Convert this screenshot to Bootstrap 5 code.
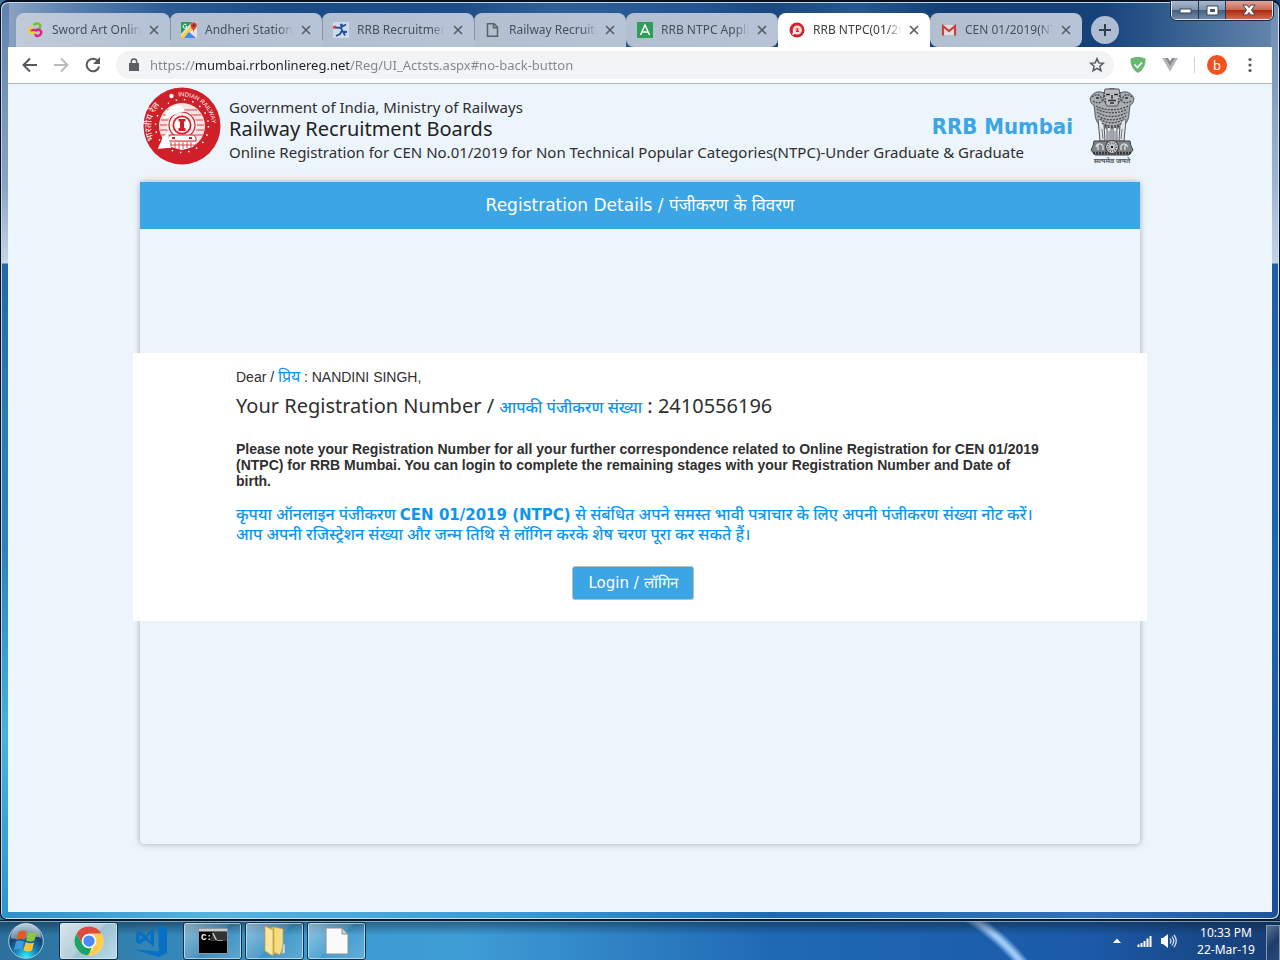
<!DOCTYPE html>
<html lang="en">
<head>
<meta charset="utf-8">
<meta name="viewport" content="width=device-width, initial-scale=1">
<title>RRB NTPC(01/2019)</title>
<link href="https://cdn.jsdelivr.net/npm/bootstrap@5.3.0/dist/css/bootstrap.min.css" rel="stylesheet">
<style>
:root{--sky:#3ba5e5;--page:#ecf4fc;--ink:#2f2f2f;--ui:"Noto Sans","Open Sans",sans-serif;--tahoma:"Noto Sans","DejaVu Sans Condensed",sans-serif}
body{font-family:"Liberation Sans",Arial,sans-serif;color:var(--ink);background:linear-gradient(90deg,#2c6f9c,#3c9ace 25%,#3f9dd6 36%,#1f69b4 60%,#1b5aa8 85%,#173d73)}
svg{display:block;flex:none}
.plain-btn{border:0;background:none;padding:0;display:flex;align-items:center;justify-content:center;color:#5a5f65;flex:none}
/* window frame */
.frame{border:1px solid #06101f;border-top-width:2px;border-radius:8px 8px 7px 7px;padding:0 7px 7px;
 box-shadow:inset 1px 1px 0 #c4d6e8,inset -1px -1px 0 #cfe4f4;
 background:
 linear-gradient(#5f82ae,#8ba3c4 20%,#c3d3e6 28%,#cddbea 261px,#2468a8 262px,#2a7ab4 45%,#2d83bd 60%,#45b4e2 80%,#2f93cb) left/8px 100% no-repeat,
 linear-gradient(#6c8cb0,#9fb5cf 20%,#c3d3e6 261px,#1d5fa6 262px,#1b66ad 60%,#1b4f96) right/8px 100% no-repeat,
 linear-gradient(90deg,#2c8fc7,#54b5df 17%,#3a9bd6 40%,#1e6ab2 60%,#3071b8 85%,#1e559c) bottom/100% 8px no-repeat,
 linear-gradient(90deg,#8ea6c4,#5d82b0 5%,#2b5b95 13%,#1b4a85 22%,#1d4d88 36%,#2e6097 43%,#235390 55%,#1a477f 60%,#275790 67%,#123e73 74%,#16427a 86%,#3c6594 93%,#6787ac)}
.win-ctl{right:6px;top:-1px;border:1px solid #dfe8f2;border-top:0;border-radius:0 0 5px 5px;overflow:hidden;outline:1px solid #1a2a44}
.win-ctl button{width:27px;height:18px;background:linear-gradient(#a9b9cc,#8195b0 48%,#455f83 52%,#7187a6);border-right:1px solid #26364f}
.win-ctl button:last-child{width:46px;border:0;background:linear-gradient(#e0a497,#cc6b57 48%,#aa2a10 52%,#d2694c)}
.tabstrip{padding:11px 0 0 8px;height:45px}
.tab-item{flex:0 1 152px;min-width:0;height:34px;padding:0 11px;background:linear-gradient(90deg,#b2bfd1,#b7c3d6);border-radius:8px 8px 0 0;position:relative}
.tab-item:first-child{flex-basis:154px;padding-left:12px;background:linear-gradient(90deg,#c0cad9,#b4c2d6)}
.tab-item+.tab-item:not(.on):not(.after)::before{content:"";position:absolute;left:0;top:7px;height:20px;border-left:1px solid #8593a7}
.tab-item a{font:12px/16px var(--ui);color:#44505e;white-space:nowrap;overflow:hidden;text-decoration:none;-webkit-mask:linear-gradient(90deg,#000 84%,transparent);mask:linear-gradient(90deg,#000 84%,transparent)}
.tab-item.on{background:#fff}
.tab-item.on a{color:#3c4043}
.tab-item.after{border-radius:8px}
.new-tab{width:28px;height:28px;border-radius:50%;background:#aebdd1;color:#2d3f55;margin:3px 0 0 9px}
.toolbar{height:37px;background:#fff;border-bottom:1px solid #b6b4b8;padding:0 15px 0 13px}
.nav-btn{margin-right:15px}
.addr{height:28px;border-radius:14px;background:#f1f3f4;padding:0 9px 0 12px}
.addr input{border:0;outline:0;font:13px/20px var(--ui);padding:0;margin-left:10px;min-width:0;color:transparent;
 background:linear-gradient(90deg,#80868b 46px,#202124 46px 200px,#80868b 200px);-webkit-background-clip:text;background-clip:text}
.avatar{width:20px;height:20px;border-radius:50%;background:#f4511e;color:#fff;font:13px/20px var(--ui)}
.divider{width:1px;height:16px;background:#cfd1d4;margin:0 12px 0 16px}
/* site */
.site{background:var(--page)}
.wrap{max-width:1000px;width:100%}
.brand{font-family:var(--tahoma);padding:3px 5px 1px 3px}
.brand p{margin:0;font-size:15px;line-height:22px;color:var(--ink)}
.brand h1{margin:0;font-size:20px;line-height:22px;font-weight:400;color:#222}
.board{font:bold 22px/28px "DejaVu Sans Condensed","DejaVu Sans",sans-serif;color:var(--sky);padding-top:18px}
.sheet{background:var(--page);border-radius:4px;box-shadow:0 0 6px rgba(0,0,0,.3)}
.sheet-head{background:var(--sky);color:#fff;font:17px/47px "DejaVu Sans","Noto Sans",sans-serif;margin:0}
.sheet-body{padding:124px 0 223px}
.notice{margin:0 -7px;background:#fff;padding:14px 103px 21px;position:relative;font-size:14px;line-height:16px}
.hi{color:#0c96f0}
.notice .dear{line-height:20px;margin:0}
.notice h2{font:20px/28px var(--tahoma);color:var(--ink);margin:5px 0 20px}
.dear .hi,h2 .hi{font-size:16px;font-weight:500}
.notice .hindi{font:500 16px/19px "Noto Sans",sans-serif;margin:0 0 22px}
.hindi b{font:bold 15px/19px "DejaVu Sans",sans-serif}
.login{background:var(--sky);color:#fff;border:1px solid #b9bcc0;border-radius:3px;font:15px/24px "DejaVu Sans",sans-serif;padding:4px 15px;margin-right:14px}
.login:hover{background:#2f97d6;color:#fff}
/* taskbar */
.taskbar{height:40px;border-top:1px solid #0b1d2e;box-shadow:inset 0 1px 0 rgba(190,220,240,.6);
 background:linear-gradient(rgba(10,30,50,.5),rgba(10,30,50,0) 14px),radial-gradient(circle at -17px 170px,transparent 197px,#8fbdf0 202px,#a5cdf7 204px,#8fbdf0 206px,transparent 211px) 80% 0/180px 100% no-repeat}
.start{margin:0 15px 0 8px}
.task{width:59px;height:38px;margin:1px 3px 0 0;border:1px solid #10304a;border-radius:3px;box-shadow:inset 0 0 0 1px rgba(220,240,250,.65);background:linear-gradient(135deg,rgba(255,255,255,.45),rgba(255,255,255,.12) 50%,rgba(255,255,255,.03) 51%,rgba(255,255,255,.2))}
.task.live{background:linear-gradient(135deg,#dbe6ea,#b3cdd8 50%,#9cc1d2 51%,#b8dcea)}
.task.bare{border-color:transparent;box-shadow:none;background:none}
.tray{margin-right:10px}
.clock{font:12px/17px var(--ui);color:#fff;width:78px;margin:3px 1px 0 0}
.peek{width:14px;height:38px;border:1px solid #8298b4;background:linear-gradient(135deg,#5d7492,#1d3c66 50%,#2a4d7d)}
</style>
</head>
<body class="min-vh-100 d-flex flex-column">

<svg width="0" height="0" class="position-absolute" aria-hidden="true">
 <symbol id="x" viewBox="0 0 10 10"><path d="M1 1l8 8M9 1L1 9" stroke="currentColor" stroke-width="1.7"/></symbol>
</svg>

<div class="frame flex-grow-1 d-flex flex-column position-relative">
 <div class="win-ctl position-absolute d-flex">
  <button class="plain-btn" aria-label="Minimize"><svg width="13" height="8"><rect x="1" y="3" width="11" height="4" fill="#fff" stroke="#3b4658"/></svg></button>
  <button class="plain-btn" aria-label="Restore"><svg width="13" height="11"><path d="M1 1h11v9H1zM4.500 4.500v2h4v-2z" fill="#fff" fill-rule="evenodd" stroke="#3b4658"/></svg></button>
  <button class="plain-btn" aria-label="Close"><svg width="14" height="12"><path d="M1 1h4l2 2.500L9 1h4L9.500 6l3.500 5H9L7 8.500 5 11H1l3.500-5z" fill="#fff" stroke="#4b4650"/></svg></button>
 </div>

 <nav class="tabstrip d-flex" aria-label="Tabs">
  <div class="tab-item d-flex align-items-center gap-2">
   <svg width="16" height="16" viewBox="0 0 16 16" fill="none" stroke-width="2.400"><path d="M6 3.500C7 .500 12.500 1 12.300 4.500c-.3 2.500-2.500 3-4.300 2.500" stroke="#76bf3a"/><path d="M4.500 4.500C1 5.500 1 10.500 4 11c2 .2 4-1 3.500-4" stroke="#f2cf1f"/><path d="M3 9c2-2 4-1 5-.5 3-2 6 .5 5 3-1 3-5 3.500-6 .500" stroke="#e3218c"/></svg>
   <a href="#" class="flex-grow-1">Sword Art Online</a><button class="plain-btn" aria-label="Close tab"><svg width="10" height="10"><use href="#x"/></svg></button>
  </div>
  <div class="tab-item d-flex align-items-center gap-2">
   <svg width="16" height="16" viewBox="0 0 16 16"><path d="M0 0h16v16H0z" fill="#e8e4dc"/><path d="M0 0h11L0 12z" fill="#279b5a"/><path d="M0 14L11 3l2 3L3 16H0z" fill="#f7cf46"/><path d="M3 16l5-6 7 6z" fill="#4285f4"/><path d="M12.500 10C12 7 9.500 6 9.500 3.500a3.200 3.200 0 0 1 6.400 0C15.900 6 13 7 12.500 10z" fill="#d5443a"/><circle cx="12.700" cy="3.500" r="1.200" fill="#7c241e"/><path d="M5.500 3A2 2 0 1 0 6 4.500H4.500" fill="none" stroke="#fff"/></svg>
   <a href="#" class="flex-grow-1">Andheri Station (</a><button class="plain-btn" aria-label="Close tab"><svg width="10" height="10"><use href="#x"/></svg></button>
  </div>
  <div class="tab-item d-flex align-items-center gap-2">
   <svg width="16" height="16" viewBox="0 0 16 16"><path d="M0 0h16v16H0z" fill="#cfdaea"/><path d="M2 5.500l5 .3 6-3.300M8 5.500l1.500 4 4.500.5M9 8.500L7 12l-4 2M10 9.500l2 4" fill="none" stroke="#2350a0" stroke-width="1.800"/><circle cx="8.500" cy="3" r="1.500" fill="#2350a0"/><path d="M0 4.500l3-1v3H0z" fill="#d43a3a"/></svg>
   <a href="#" class="flex-grow-1">RRB Recruitment</a><button class="plain-btn" aria-label="Close tab"><svg width="10" height="10"><use href="#x"/></svg></button>
  </div>
  <div class="tab-item d-flex align-items-center gap-2">
   <svg width="16" height="16" viewBox="0 0 16 16" fill="none" stroke="#5a6066" stroke-width="1.500"><path d="M2.500 1.700h6.500l3.500 3.600v9H2.500zM8.500 1.700v4h4"/></svg>
   <a href="#" class="flex-grow-1">Railway Recruitment</a><button class="plain-btn" aria-label="Close tab"><svg width="10" height="10"><use href="#x"/></svg></button>
  </div>
  <div class="tab-item after d-flex align-items-center gap-2">
   <svg width="16" height="16" viewBox="0 0 16 16"><path d="M0 0h16v16H0z" fill="#2f9e58"/><path d="M3.500 13L8 3l4.500 10M5 10h6" fill="none" stroke="#fff" stroke-width="1.500"/></svg>
   <a href="#" class="flex-grow-1">RRB NTPC Application</a><button class="plain-btn" aria-label="Close tab"><svg width="10" height="10"><use href="#x"/></svg></button>
  </div>
  <div class="tab-item on d-flex align-items-center gap-2">
   <svg width="16" height="16" viewBox="0 0 16 16"><circle cx="8" cy="8" r="7.500" fill="#d2232e"/><circle cx="8.300" cy="8" r="4.600" fill="#fbe0e0"/><path d="M3 13l2-6 1 5z" fill="#fff"/><circle cx="8.300" cy="7.800" r="2.200" fill="#ee9a9d"/><path d="M7 9.500h3M8.300 6.500v3" stroke="#d2232e"/></svg>
   <a href="#" class="flex-grow-1">RRB NTPC(01/2019)</a><button class="plain-btn" aria-label="Close tab"><svg width="10" height="10"><use href="#x"/></svg></button>
  </div>
  <div class="tab-item after d-flex align-items-center gap-2">
   <svg width="16" height="16" viewBox="0 0 16 16"><path d="M2 3h12v10H2z" fill="#dfe0e4"/><path d="M2 13.500V4l6 5 6-5v9.500" fill="none" stroke="#c9403b" stroke-width="2.200"/></svg>
   <a href="#" class="flex-grow-1">CEN 01/2019(NTPC)</a><button class="plain-btn" aria-label="Close tab"><svg width="10" height="10"><use href="#x"/></svg></button>
  </div>
  <button class="plain-btn new-tab" aria-label="New tab"><svg width="12" height="12"><path d="M6 0v12M0 6h12" stroke="currentColor" stroke-width="2"/></svg></button>
 </nav>

 <div class="toolbar d-flex align-items-center">
  <button class="plain-btn nav-btn" aria-label="Back"><svg width="17" height="16" fill="none" stroke="#54585d" stroke-width="2"><path d="M16 8H2.500M9 1.500L2.500 8 9 14.500"/></svg></button>
  <button class="plain-btn nav-btn" aria-label="Forward"><svg width="17" height="16" fill="none" stroke="#b9bbbe" stroke-width="2"><path d="M1 8h13.500M8 1.500L14.500 8 8 14.500"/></svg></button>
  <button class="plain-btn nav-btn" aria-label="Reload"><svg width="16" height="16"><path d="M13 4.200A6.300 6.300 0 1 0 14.100 9.500" fill="none" stroke="#54585d" stroke-width="2"/><path d="M15 0v7H8z" fill="#54585d"/></svg></button>
  <div class="addr flex-grow-1 d-flex align-items-center">
   <svg width="12" height="14"><path d="M1 5h10v8H1z" fill="#5a5f65"/><path d="M3.300 6V3.700a2.700 2.700 0 0 1 5.400 0V6" fill="none" stroke="#5a5f65" stroke-width="1.500"/></svg>
   <input class="flex-grow-1" type="text" aria-label="Address" value="https://mumbai.rrbonlinereg.net/Reg/UI_Actsts.aspx#no-back-button">
   <button class="plain-btn" aria-label="Bookmark"><svg width="16" height="16" viewBox="0 0 16 16"><path d="M8 1.800l1.800 4.100 4.500.4-3.400 3 1 4.400L8 11.400l-3.900 2.300 1-4.400-3.400-3 4.500-.4z" fill="none" stroke="#54585d" stroke-width="1.500"/></svg></button>
  </div>
  <button class="plain-btn ms-3" aria-label="Ad blocker"><svg width="16" height="16"><path d="M8 0c3 0 5 .600 7.500 1.500C16 8 13 13 8 16 3 13 0 8 .500 1.500 3 .600 5 0 8 0z" fill="#67b96f"/><path d="M4.500 7.500l3 3 4.500-5" fill="none" stroke="#fff" stroke-width="1.700"/></svg></button>
  <button class="plain-btn ms-3" aria-label="Vue devtools"><svg width="16" height="14"><path d="M0 0h3l5 8.500L13 0h3L8 13.500z" fill="#b5b8bb"/><path d="M3 0h3l2 3.300L10 0h3L8 8.500z" fill="#868a8e"/></svg></button>
  <span class="divider"></span>
  <button class="plain-btn avatar">b</button>
  <button class="plain-btn ms-3" aria-label="Menu"><svg width="14" height="16"><g fill="#54585d"><circle cx="7" cy="2.500" r="1.600"/><circle cx="7" cy="8" r="1.600"/><circle cx="7" cy="13.500" r="1.600"/></g></svg></button>
 </div>

 <main class="site flex-grow-1">
  <div class="wrap mx-auto">
   <header class="d-flex brand">
    <svg width="78" height="78" viewBox="0 0 78 78" role="img" aria-label="Indian Railways">
     <circle cx="39" cy="39" r="38.500" fill="#cf1f28"/>
     <circle cx="39" cy="39" r="26.500" fill="none" stroke="#fff" stroke-width="1.500" stroke-dasharray="1.500 6.900"/>
     <circle cx="39" cy="39" r="23" fill="#f9e4e3"/>
     <path d="M24 23h30M20 28h38M18 33h42M17 38h44M17 43h44M18 48h42" stroke="#e3777a" stroke-width="1.500"/>
     <circle cx="39" cy="39" r="15" fill="#fff" opacity=".75"/>
     <circle cx="39" cy="38" r="13" fill="none" stroke="#cf1f28" stroke-width="1.200"/>
     <circle cx="39" cy="38" r="9.500" fill="#cf1f28"/><circle cx="39" cy="38" r="7.800" fill="#fff"/>
     <path d="M35.500 32h7v2.500H41v6.500h1.500v3h-7v-3H37v-6.500h-1.500z" fill="#cf1f28"/>
     <path d="M27 48h24l2 3v3H25v-3z" fill="#fff" stroke="#cf1f28"/><path d="M29 51h3M46 51h3" stroke="#cf1f28" stroke-width="2"/>
     <path d="M26 55h27l-3 5-11 3-11-3z" fill="#fff"/><path d="M28 55v5M32 55v6M36 55v7M40 55v7M44 55v6M48 55v6M27 58h25" stroke="#cf1f28" stroke-width=".8"/>
     <path d="M15 62c1-5 4-7 4-11 2-2 4-3 6-7l1 9 2 8c-4 0-8 0-13 1z" fill="#fff"/>
     <path d="M24 24c4-4 10-6 14-6l4 6-9 3-12 5z" fill="#fff"/>
     <circle cx="28.500" cy="9" r="2.200" fill="#fff"/>
     <path id="arcR" d="M35.500 9.500A30 30 0 0 1 69 42" fill="none"/><path id="arcL" d="M11 53A32 32 0 0 1 25 12" fill="none"/>
     <text font-family="Liberation Sans,sans-serif" font-size="6" fill="#fff"><textPath href="#arcR">INDIAN RAILWAY</textPath></text>
     <text font-family="Noto Sans,sans-serif" font-size="9" fill="#fff"><textPath href="#arcL">भारतीय रेल</textPath></text>
    </svg>
    <div class="flex-grow-1 pt-2 ps-2">
     <div class="d-flex justify-content-between align-items-center">
      <div>
       <p>Government of India, Ministry of Railways</p>
       <h1>Railway Recruitment Boards</h1>
      </div>
      <div class="board text-nowrap">RRB Mumbai</div>
     </div>
     <p>Online Registration for CEN No.01/2019 for Non Technical Popular Categories(NTPC)-Under Graduate &amp; Graduate</p>
    </div>
    <svg class="ms-3" width="46" height="78" viewBox="0 0 46 78" role="img" aria-label="State Emblem of India">
     <g fill="#a9adb1" stroke="#55585c" stroke-width="1">
      <path d="M15 6C9 3 3 6 1 12c1 3 1 5 4 6l1 8c0 8 4 12 8 15h18c4-3 8-7 8-15l1-8c3-1 3-3 4-6-2-6-8-9-14-6-4-6-12-6-16 0z"/>
      <path d="M9 32l2 22h5l-1-17M18 38v17h4V40M24 40v15h4V38M31 37l-1 17h5l2-22" fill="#e3e6e9"/>
      <path d="M16 2h14l2 10-4 7H18l-4-7z" fill="#b9bcc0"/>
     </g>
     <g fill="none" stroke="#4a4d51" stroke-width="1.300" stroke-dasharray="2 1.100">
      <path d="M3 10c4-4 9-2 10 3M43 10c-4-4-9-2-10 3M4 14c4 3 8 2 10-1M42 14c-4 3-8 2-10-1M7 19c8 5 24 5 32 0M8 22c8 5 22 5 30 0M8 25c8 6 22 6 30 0M9 29c8 5 20 5 28 0M11 32c7 5 17 5 24 0M13 36c5 4 15 4 20 0M16 39c4 2 10 2 14 0M15 5l2 12M31 5l-2 12"/>
     </g>
     <path d="M17 7.500h4M25 7.500h4M23 8v4M19 13.500h8M21 16h4M7 11h3M36 11h3" stroke="#2c2e31" stroke-width="1.500"/>
     <path d="M13 42l1 10M33 42l-1 10M20 44v10M26 44v10" stroke="#73777b" stroke-width="1"/>
     <path d="M5 54h36l1 5 2 4-4 5H6l-4-5 2-4z" fill="#808488" stroke="#3c3f42"/>
     <path d="M4 66h38" stroke="#33363a" stroke-width="2.500" stroke-dasharray="2 1"/>
     <circle cx="23" cy="60" r="6.500" fill="#d4d7da" stroke="#444" stroke-width="1.200"/><circle cx="23" cy="60" r="4" fill="none" stroke="#666" stroke-width="2.500" stroke-dasharray="1 1"/><circle cx="23" cy="60" r="1.300" fill="#222"/>
     <path d="M7 60c1-4 5-4 7-1v4M9 58v5M32 63v-4c2-3 5-3 7 1M36 58v5" fill="none" stroke="#dfe2e4" stroke-width="1.300"/>
     <text x="23" y="76" text-anchor="middle" font-family="Noto Sans,sans-serif" font-size="7" font-weight="bold" fill="#55585c">सत्यमेव जयते</text>
    </svg>
   </header>

   <section class="sheet mt-3 mb-5">
    <h2 class="sheet-head text-center">Registration Details / पंजीकरण के विवरण</h2>
    <div class="sheet-body">
     <div class="notice">
      <p class="dear">Dear / <span class="hi">प्रिय</span> : NANDINI SINGH,</p>
      <h2>Your Registration Number / <span class="hi">आपकी पंजीकरण संख्या</span> : 2410556196</h2>
      <p class="fw-bold mb-3">Please note your Registration Number for all your further correspondence related to Online Registration for CEN 01/2019 (NTPC) for RRB Mumbai. You can login to complete the remaining stages with your Registration Number and Date of birth.</p>
      <p class="hi hindi">कृपया ऑनलाइन पंजीकरण <b>CEN 01/2019 (NTPC)</b> से संबंधित अपने समस्त भावी पत्राचार के लिए अपनी पंजीकरण संख्या नोट करें।<br>आप अपनी रजिस्ट्रेशन संख्या और जन्म तिथि से लॉगिन करके शेष चरण पूरा कर सकते हैं।</p>
      <div class="text-center"><button class="login" type="button">Login / लॉगिन</button></div>
     </div>
    </div>
   </section>
  </div>
 </main>
</div>

<footer class="taskbar d-flex">
 <button class="plain-btn start" aria-label="Start"><svg width="36" height="38" viewBox="0 0 36 36">
  <defs><radialGradient id="orb" cx=".5" cy=".95" r=".9"><stop offset="0" stop-color="#2ff0ff"/><stop offset=".35" stop-color="#1783b8"/><stop offset=".7" stop-color="#12406f"/><stop offset="1" stop-color="#7da3bd"/></radialGradient></defs>
  <circle cx="18" cy="18" r="17.300" fill="url(#orb)" stroke="#a9cbdc"/><path d="M3 15a15 15 0 0 1 30 0c-8-4-22 4-30 0z" fill="#fff" opacity=".4"/>
  <path d="M10.500 9c3-2 5-2 8-.5L16.500 17c-3-1.500-5.500-1.300-8 0z" fill="#e8562a"/><path d="M20 9c3 1.500 5.500 1.500 9 0l-2.500 8.500c-3 1.500-5.500 1.200-8.300-.2z" fill="#8cc63f"/><path d="M8 18.500c3-1.500 5-1.300 8 .2L14 27c-3-1.500-5-1.300-8 0z" fill="#3f9be0"/><path d="M17.700 19.200c3 1.500 5.500 1.500 8.300.2L24 27.500c-3 1.500-5.500 1.200-8.500-.2z" fill="#fcc530"/></svg></button>
 <button class="plain-btn task live" aria-label="Chrome"><svg width="30" height="30" viewBox="0 0 48 48"><circle cx="24" cy="24" r="23" fill="#fff"/><path d="M24 1a23 23 0 0 1 20 11.500H24a11.500 11.500 0 0 0-10 17.200L4 12.500A23 23 0 0 1 24 1z" fill="#dd4b3e"/><path d="M4 12.500l10 17.200A11.500 11.500 0 0 0 28 34.800L24 47A23 23 0 0 1 4 12.500z" fill="#1da462"/><path d="M44 12.500A23 23 0 0 1 22 47l12-17.300a11.500 11.500 0 0 0-10-17.200z" fill="#ffcd46"/><circle cx="24" cy="24" r="11.500" fill="#f4f4f4"/><circle cx="24" cy="24" r="9" fill="#4c8bf5"/></svg></button>
 <button class="plain-btn task bare" aria-label="Visual Studio Code"><svg width="33" height="32" viewBox="0 0 33 32"><path d="M24.500 0L33 3.500v24.500L24.500 32 0 24.500l24.500 2z" fill="#0670c4"/><path d="M20 3v19L11.500 14.800 6 19l-4-2V8l4-2 5.500 4.200zM16.500 8.500L13 12.500l3.500 4zM5.500 9.500v6l3.300-3z" fill="#0670c4" fill-rule="evenodd"/></svg></button>
 <button class="plain-btn task" aria-label="Command Prompt"><svg width="30" height="26" viewBox="0 0 30 26"><path d="M.5.500h29v25H.5z" fill="#000" stroke="#8e979d"/><path d="M1 1h28v2.500H1z" fill="#c4cdd2"/><path d="M15 4h14v9H12z" fill="#333"/><text x="3" y="12" font-family="Liberation Mono,monospace" font-size="9" font-weight="bold" fill="#fff">C:\_</text></svg></button>
 <button class="plain-btn task" aria-label="Explorer"><svg width="26" height="32" viewBox="0 0 26 32"><path d="M5 4l6-2 10 2v24l-14 1z" fill="#e0bd55"/><path d="M12 2l9 2v17l-3 9-6-3z" fill="#f5dd86" stroke="#c59d37" stroke-width=".7"/><path d="M3 1l8 4v26l-8-5z" fill="#f9e7a0" stroke="#c59d37" stroke-width=".8"/><path d="M21 19h2v9l-3 1z" fill="#cfe4ea" stroke="#7a9bab" stroke-width=".7"/></svg></button>
 <button class="plain-btn task" aria-label="Document"><svg width="24" height="28" viewBox="0 0 24 28"><path d="M1 1h16l6 6v20H1z" fill="#fafafa" stroke="#8a8f94"/><path d="M17 1v6h6z" fill="#cfd3d6" stroke="#8a8f94"/></svg></button>
 <div class="tray ms-auto d-flex align-items-center text-white">
  <button class="plain-btn me-3" aria-label="Show hidden icons"><svg width="8" height="5"><path d="M0 5l4-4.500L8 5z" fill="#fff"/></svg></button>
  <svg class="me-2" width="15" height="12"><path d="M1.500 12V9.500M4.500 12V8M7.500 12V6M10.500 12V3.500M13.500 12V1" stroke="#fff" stroke-width="2"/></svg>
  <svg width="17" height="14"><path d="M1 4h2l5-4v14l-5-4H1z" fill="#fff"/><path d="M10 4.500q2 2.500 0 5M12 2.500q3.500 4.500 0 9M14 .8q4.500 6 0 12.400" fill="none" stroke="#dfe9f3" stroke-width="1.200"/></svg>
 </div>
 <div class="clock text-center">10:33 PM<br>22-Mar-19</div>
 <button class="plain-btn peek mt-1" aria-label="Show desktop"></button>
</footer>
<script src="https://cdn.jsdelivr.net/npm/bootstrap@5.3.0/dist/js/bootstrap.bundle.min.js"></script>
</body>
</html>
